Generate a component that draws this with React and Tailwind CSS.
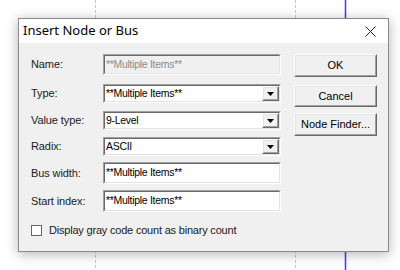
import React from "react";

const font = { fontFamily: '"Liberation Sans", Arial, sans-serif' };

const Sunken = ({ className = "", inner = "bg-white", children }) => (
  <div
    className={`border border-t-[#a0a0a0] border-l-[#a0a0a0] border-b-white border-r-white ${className}`}
  >
    <div
      className={`h-full w-full flex items-center border border-t-[#696969] border-l-[#696969] border-b-[#e3e3e3] border-r-[#e3e3e3] ${inner}`}
    >
      {children}
    </div>
  </div>
);

const Raised = ({ className = "", children }) => (
  <div
    className={`border border-t-white border-l-white border-b-[#696969] border-r-[#696969] ${className}`}
  >
    <div className="h-full w-full flex items-center justify-center border border-t-[#e3e3e3] border-l-[#e3e3e3] border-b-[#a0a0a0] border-r-[#a0a0a0] bg-[#f0f0f0]">
      {children}
    </div>
  </div>
);

const Label = ({ children }) => (
  <div className="w-[72px] text-[11px] tracking-[-0.1px] text-[#1a1a1a]">{children}</div>
);

const TextBox = ({ value, disabled, h }) => (
  <Sunken
    className={`w-[178px] ${h}`}
    inner={disabled ? "bg-[#f0f0f0]" : "bg-white"}
  >
    <span
      className={`pl-[1px] text-[10.5px] tracking-[-0.3px] ${disabled ? "text-[#8c8c8c]" : "text-black"}`}
    >
      {value}
    </span>
  </Sunken>
);

const Combo = ({ value }) => (
  <Sunken className="w-[178px] h-[19px]">
    <span className="flex-1 pl-[1px] text-[10.5px] tracking-[-0.3px] text-black">{value}</span>
    <Raised className="w-[17px] h-full">
      <svg width="7" height="4" viewBox="0 0 7 4">
        <path d="M0 0 H7 L3.5 4 Z" fill="#000" />
      </svg>
    </Raised>
  </Sunken>
);

const Row = ({ label, className, children }) => (
  <div className={`flex items-center ${className}`}>
    <Label>{label}</Label>
    {children}
  </div>
);

const Button = ({ children, className }) => (
  <Raised className={`w-[83px] ${className}`}>
    <span className="text-[11px] text-black">{children}</span>
  </Raised>
);

export default function App() {
  return (
    <div className="relative w-[400px] h-[270px] bg-white overflow-hidden" style={font}>
      <svg className="absolute inset-0" width="400" height="270">
        <line x1="95.5" y1="0" x2="95.5" y2="270" stroke="#c4c4c4" strokeDasharray="3 2" />
        <line x1="295.5" y1="0" x2="295.5" y2="270" stroke="#c4c4c4" strokeDasharray="3 2" />
        <line x1="345.5" y1="0" x2="345.5" y2="270" stroke="#3a3aff" strokeWidth="1.5" />
      </svg>

      <div className="relative ml-[18px] mt-[18px] w-[371px] h-[234px] border border-[#8a8a8a] bg-[#f0f0f0] shadow-[0_2px_12px_rgba(0,0,0,0.3)]">
        <div className="h-[24px] bg-white flex items-center justify-between pl-[4px] pr-[12px]">
          <span
            className="text-[13px] text-black"
            style={{ fontFamily: '"Noto Sans", "Open Sans", sans-serif' }}
          >
            Insert Node or Bus
          </span>
          <svg width="11" height="11" viewBox="0 0 11 11">
            <path d="M0.5 0.5 L10.5 10.5 M10.5 0.5 L0.5 10.5" stroke="#222" strokeWidth="1" />
          </svg>
        </div>

        <div className="flex pl-[12px] pt-[11px]">
          <div className="flex flex-col">
            <Row label="Name:" className="h-[21px]">
              <TextBox value="**Multiple Items**" disabled h="h-[21px]" />
            </Row>
            <Row label="Type:" className="mt-[9px] h-[19px]">
              <Combo value="**Multiple Items**" />
            </Row>
            <Row label="Value type:" className="mt-[8px] h-[19px]">
              <Combo value="9-Level" />
            </Row>
            <Row label="Radix:" className="mt-[7px] h-[19px]">
              <Combo value="ASCII" />
            </Row>
            <Row label="Bus width:" className="mt-[6px] h-[22px]">
              <TextBox value="**Multiple Items**" h="h-[22px]" />
            </Row>
            <Row label="Start index:" className="mt-[6px] h-[22px]">
              <TextBox value="**Multiple Items**" h="h-[22px]" />
            </Row>
            <div className="mt-[12px] flex items-center h-[12px]">
              <div className="w-[11px] h-[11px] border border-[#666] bg-white" />
              <span className="ml-[7px] text-[11px] tracking-[-0.2px] text-[#1a1a1a]">
                Display gray code count as binary count
              </span>
            </div>
          </div>

          <div className="ml-[13px] flex flex-col">
            <Button className="h-[23px]">OK</Button>
            <Button className="mt-[8px] h-[22px]">Cancel</Button>
            <Button className="mt-[6px] h-[23px]">Node Finder...</Button>
          </div>
        </div>
      </div>
    </div>
  );
}
